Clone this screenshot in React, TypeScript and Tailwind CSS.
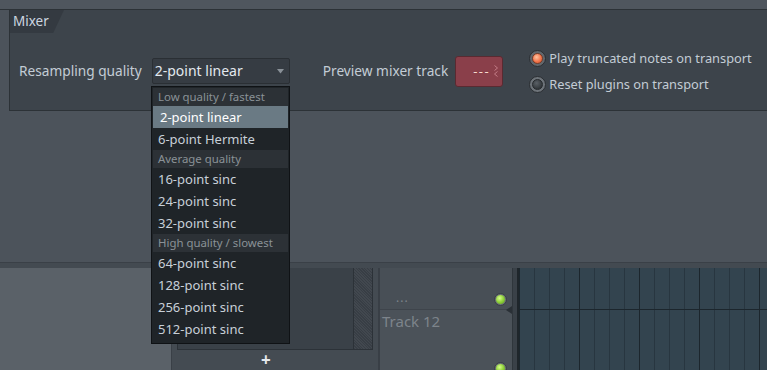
import React from "react";

const font = { fontFamily: '"Noto Sans", "Open Sans", sans-serif' };

function Radio({ on }: { on: boolean }) {
  return on ? (
    <span className="w-[17px] h-[17px] rounded-full bg-[#62676c] border border-[#2a2e32] flex items-center justify-center">
      <span className="w-[11px] h-[11px] rounded-full bg-[radial-gradient(circle_at_40%_35%,#ffc3a0_0%,#f2764c_55%,#c9502e_100%)] border border-[#7a3a24]" />
    </span>
  ) : (
    <span className="w-[17px] h-[17px] rounded-full bg-[#6d7379] border border-[#2a2e32] flex items-center justify-center">
      <span className="w-[11px] h-[11px] rounded-full bg-[radial-gradient(circle_at_40%_35%,#5a6066_0%,#33383c_70%)] border border-[#25292c]" />
    </span>
  );
}

function Led({ className }: { className: string }) {
  return (
    <span className={"absolute w-[13px] h-[13px] rounded-full bg-[#6a7076] border border-[#3a3f44] flex items-center justify-center " + className}>
      <span className="w-[9px] h-[9px] rounded-full bg-[radial-gradient(circle_at_40%_35%,#d9ff8a_0%,#8fd13a_50%,#5c9a1c_100%)]" />
    </span>
  );
}

type Row = { t: string; h?: boolean; sel?: boolean };
const rows: Row[] = [
  { t: "Low quality / fastest", h: true },
  { t: "2-point linear", sel: true },
  { t: "6-point Hermite" },
  { t: "Average quality", h: true },
  { t: "16-point sinc" },
  { t: "24-point sinc" },
  { t: "32-point sinc" },
  { t: "High quality / slowest", h: true },
  { t: "64-point sinc" },
  { t: "128-point sinc" },
  { t: "256-point sinc" },
  { t: "512-point sinc" },
];

export default function App() {
  const cols = Array.from({ length: 17 });
  return (
    <div style={font} className="relative w-[767px] h-[370px] overflow-hidden bg-[#4c535b] flex flex-col">
      <div className="h-[9px] shrink-0 bg-[#4f565e]" />
      <div className="h-px shrink-0 bg-[#2c3237]" />
      {/* Mixer panel */}
      <div className="ml-[9px] h-[101px] shrink-0 bg-[#3d444b] border-l border-b border-[#2c3237] flex flex-col">
        <div className="h-[23px] w-[54px] bg-[#343a41] [clip-path:polygon(0_0,100%_0,80%_100%,0_100%)] rounded-br-[3px] flex items-center pl-[3px]">
          <span className="text-[13.5px] text-[#cdd6e0] leading-none">Mixer</span>
        </div>
        <div className="h-[76px] flex items-center pl-[9px]">
          <span className="text-[13.7px] text-[#c3ccd5] leading-none whitespace-nowrap">Resampling quality</span>
          <div className="ml-[10px] shrink-0 w-[138px] h-[26px] bg-[#363c43] border border-[#2a2f34] rounded-[2px] flex items-center pl-[2px] pr-[5px]">
            <span className="text-[14px] text-[#e2e8ee] leading-none flex-1 whitespace-nowrap">2-point linear</span>
            <svg width="7" height="5" viewBox="0 0 7 5"><path d="M0 0 L7 0 L3.5 4.5 Z" fill="#8a9198" /></svg>
          </div>
          <span className="ml-[33px] text-[13.7px] text-[#c3ccd5] leading-none whitespace-nowrap">Preview mixer track</span>
          <div className="ml-[7px] shrink-0 w-[48px] h-[31px] rounded-[3px] bg-[#8a3f4a] border border-[#5a2a31] flex items-center justify-end pr-[4px] gap-[4px]">
            <span className="text-[13px] text-[#f7dccf] leading-none tracking-[1.5px]">---</span>
            <svg width="4" height="12" viewBox="0 0 4 12">
              <path d="M0.5 0.5 L3.5 3 L0.5 5.5" stroke="#c27d87" strokeWidth="1" fill="none" />
              <path d="M3.5 6.5 L0.5 9 L3.5 11.5" stroke="#c27d87" strokeWidth="1" fill="none" />
            </svg>
          </div>
          <div className="ml-[26px] flex flex-col gap-[9px]">
            <div className="flex items-center gap-[3px]">
              <Radio on />
              <span className="text-[12.8px] text-[#c3ccd5] leading-none whitespace-nowrap">Play truncated notes on transport</span>
            </div>
            <div className="flex items-center gap-[3px]">
              <Radio on={false} />
              <span className="text-[12.8px] text-[#c3ccd5] leading-none whitespace-nowrap">Reset plugins on transport</span>
            </div>
          </div>
        </div>
      </div>
      <div className="flex-1" />
      <div className="h-px shrink-0 bg-[#3a4047]" />
      <div className="h-[5px] shrink-0 bg-[#434a51]" />
      {/* lower area */}
      <div className="h-[102px] shrink-0 flex">
        <div className="w-[172px] shrink-0 bg-[#5a6168] border-r border-[#3a4047]" />
        <div className="w-[206px] shrink-0 bg-[#444b52] flex flex-col pl-[5px]">
          <div className="w-[196px] h-[82px] bg-[#3a4148] border border-[#2c3238] border-t-0 flex justify-end">
            <div className="w-[19px] h-full border-l border-[#2c3238] bg-[#3e444b] bg-[repeating-linear-gradient(45deg,#383e45_0px,#383e45_1px,#42484f_1px,#42484f_2px)]" />
          </div>
          <div className="h-[18px] pl-[84px] flex items-center">
            <span className="text-[17px] font-bold text-[#e5e9ee] leading-none">+</span>
          </div>
        </div>
        <div className="w-[2px] shrink-0 bg-[#393f46]" />
        <div className="relative w-[132px] shrink-0 flex flex-col">
          <div className="h-[42px] bg-[#484f56] border-b border-[#3e444b] pl-[16px] pt-[26px]">
            <div className="text-[12px] text-[#7d848b] leading-[8px] h-[8px] tracking-[1px]">...</div>
          </div>
          <div className="flex-1 bg-[#4b5259] pl-[2px] pt-[3px]">
            <div className="text-[15px] text-[#7d848b] leading-[16px]">Track 12</div>
          </div>
          <Led className="left-[114px] top-[25px]" />
          <Led className="left-[114px] top-[94px]" />
          <svg className="absolute left-[126px] top-[38px]" width="6" height="8" viewBox="0 0 6 8"><path d="M6 0 L0 4 L6 8 Z" fill="#2a3036" /></svg>
        </div>
        <div className="w-[7px] shrink-0 bg-[#3a4148] border-l border-[#2f363c] border-r-2 border-r-[#1f262b]" />
        <div className="relative flex-1 min-w-0 overflow-hidden bg-[#33444f] flex">
          {cols.map((_, i) => (
            <div key={i} className={"w-[15px] shrink-0 border-l " + (i % 4 === 0 ? "border-[#1c262d]" : "border-[#283640]")} />
          ))}
          <div className="absolute left-0 right-0 top-[41px] h-px bg-[#1c262d]" />
        </div>
      </div>
      {/* dropdown list */}
      <div className="absolute left-[151px] top-[86px] w-[139px] bg-[#1f2428] border border-[#0f1215] pt-px pb-[3px]">
        {rows.map((r, i) =>
          r.h ? (
            <div key={i} className="h-[18px] mx-px bg-[#2c3136] flex items-center pl-[5px] text-[11.4px] text-[#8a9197] leading-none whitespace-nowrap">
              {r.t}
            </div>
          ) : (
            <div
              key={i}
              className={
                "h-[22px] mx-px flex items-center text-[13px] leading-none " +
                (r.sel ? "bg-[#6a7a84] text-[#ffffff] pl-[7px]" : "text-[#c8d0d8] pl-[5px]")
              }
            >
              {r.t}
            </div>
          )
        )}
      </div>
    </div>
  );
}
